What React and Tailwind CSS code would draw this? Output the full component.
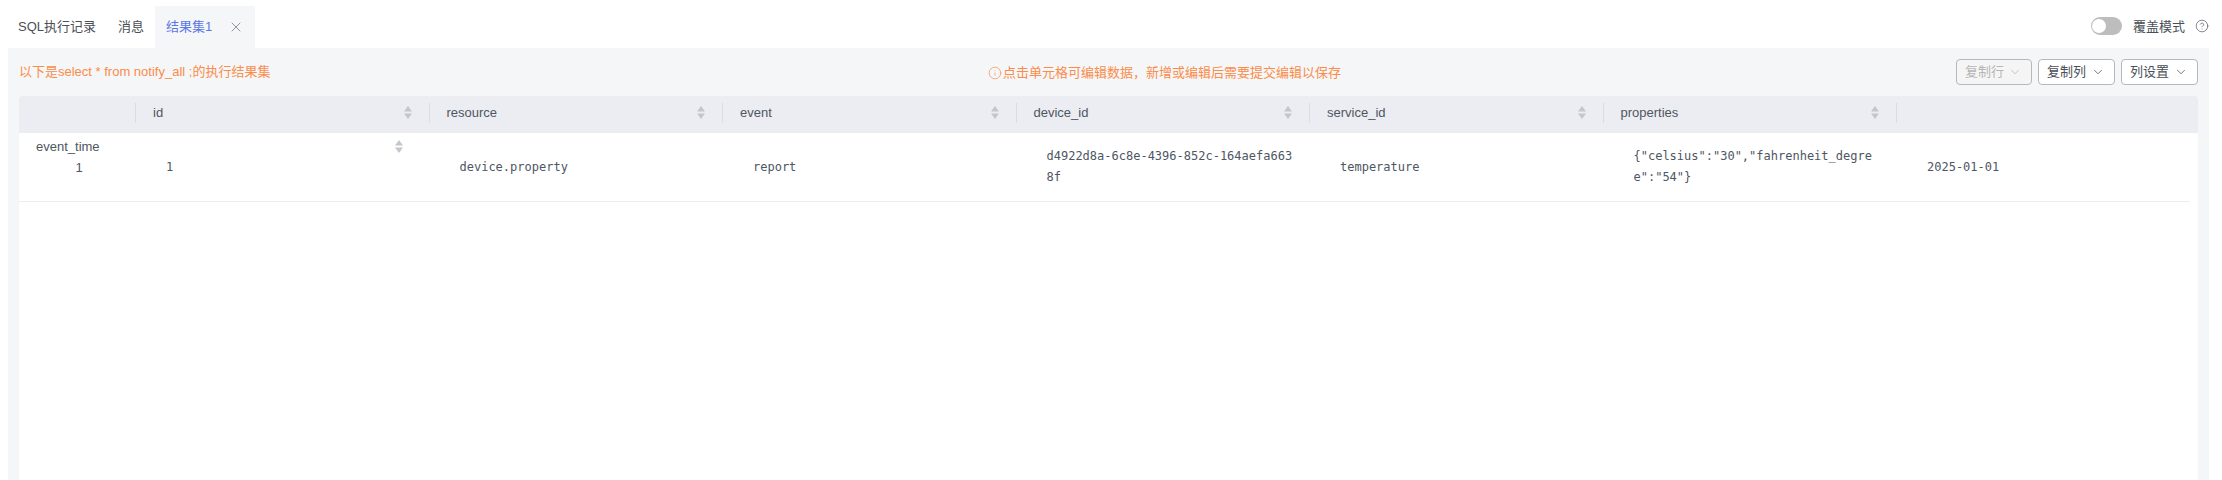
import React from "react";
import { ChevronDown, X, Info, CircleHelp } from "lucide-react";

const columns = ["id", "resource", "event", "device_id", "service_id", "properties", "event_time"];

const row = [
  "1",
  "device.property",
  "report",
  "d4922d8a-6c8e-4396-852c-164aefa6638f",
  "temperature",
  '{"celsius":"30","fahrenheit_degree":"54"}',
  "2025-01-01",
];

const gridCols = "grid grid-cols-[117px_293.5px_293.5px_293.5px_293.5px_293.5px_293.5px_1fr]";

const SortIcon = () => (
  <svg width="8" height="13" viewBox="0 0 8 13" className="shrink-0">
    <path d="M4 0 L8 5.5 L0 5.5 Z" fill="#c3c6cc" />
    <path d="M4 13 L8 7.5 L0 7.5 Z" fill="#c3c6cc" />
  </svg>
);

const DropButton = ({ label, disabled, width }) => (
  <button
    className={`flex h-[26px] items-center justify-between rounded border border-[#b4b8bf] pl-2 pr-[9px] text-[13px] ${width} ${
      disabled ? "bg-[#f5f5f5] text-[#b5b5b5]" : "bg-white text-[#4b4f57]"
    }`}
  >
    <span>{label}</span>
    <ChevronDown size={14} strokeWidth={1.3} />
  </button>
);

const App = () => {
  return (
    <div className="h-[480px] w-[2222px] overflow-hidden bg-white font-['Liberation_Sans','Noto_Sans_CJK_SC',sans-serif] text-[#4e5969]">
      <div className="flex h-[48px] items-end justify-between">
        <div className="flex h-[42px] items-stretch pl-[18px] text-[13px]">
          <div className="flex items-center pr-[22px] text-[#4b5057]">SQL执行记录</div>
          <div className="flex items-center pr-[11px] text-[#4b5057]">消息</div>
          <div className="flex w-[100px] items-center bg-[#f5f6f8] pl-[11px] text-[#5a78e6]">
            结果集1
            <X size={16} strokeWidth={1.2} className="ml-[16px] text-[#7a7d84]" />
          </div>
        </div>
        <div className="mb-[12px] flex items-center pr-[13px]">
          <div className="flex h-[18px] w-[31px] items-center rounded-full bg-[#bdbdbd] pl-[1px]">
            <div className="h-[14px] w-[14px] rounded-full bg-white" />
          </div>
          <span className="ml-[11px] text-[13px] text-[#4b5057]">覆盖模式</span>
          <CircleHelp size={14} strokeWidth={1.2} className="ml-[10px] text-[#55585e]" />
        </div>
      </div>

      <div className="ml-[8px] h-[432px] w-[2201px] bg-[#f5f6f8] px-[11px]">
        <div className="relative flex h-[48px] items-center justify-between text-[13px] text-[#fb8c4a]">
          <span>以下是select * from notify_all ;的执行结果集</span>
          <div className="absolute left-[969px] top-[15px] flex items-center">
            <Info size={14} strokeWidth={1.2} className="mr-[1px]" />
            <span>点击单元格可编辑数据，新增或编辑后需要提交编辑以保存</span>
          </div>
          <div className="flex gap-[6px]">
            <DropButton label="复制行" disabled width="w-[76px]" />
            <DropButton label="复制列" width="w-[77px]" />
            <DropButton label="列设置" width="w-[77px]" />
          </div>
        </div>

        <div className="h-[384px] rounded-t-[3px] bg-white">
          <div className={`${gridCols} h-[37px] rounded-t-[3px] bg-[#ebedf2] text-[13px] text-[#4f5660]`}>
            <div className="my-[7px] border-r border-[#d9dce1]" />
            {columns.map((col, i) => (
              <div
                key={col}
                className={`my-[7px] flex items-center justify-between pl-[17px] ${
                  i === columns.length - 1 ? "col-span-2 pr-[27px]" : "border-r border-[#d9dce1] pr-[17px]"
                }`}
              >
                <span>{col}</span>
                <SortIcon />
              </div>
            ))}
          </div>

          <div className={`${gridCols} mr-[8px] h-[69px] border-b border-[#ebedf0] font-['DejaVu_Sans_Mono',monospace] text-[12px] leading-[21px] text-[#4e5663]`}>
            <div className="flex items-center justify-center pl-[3px] font-['Liberation_Sans',sans-serif] text-[13px]">1</div>
            {row.map((cell, i) => (
              <div key={i} className="flex items-center pl-[30px] pr-[17px]">
                <span className="break-all">{cell}</span>
              </div>
            ))}
          </div>
        </div>
      </div>
    </div>
  );
};

export default App;
